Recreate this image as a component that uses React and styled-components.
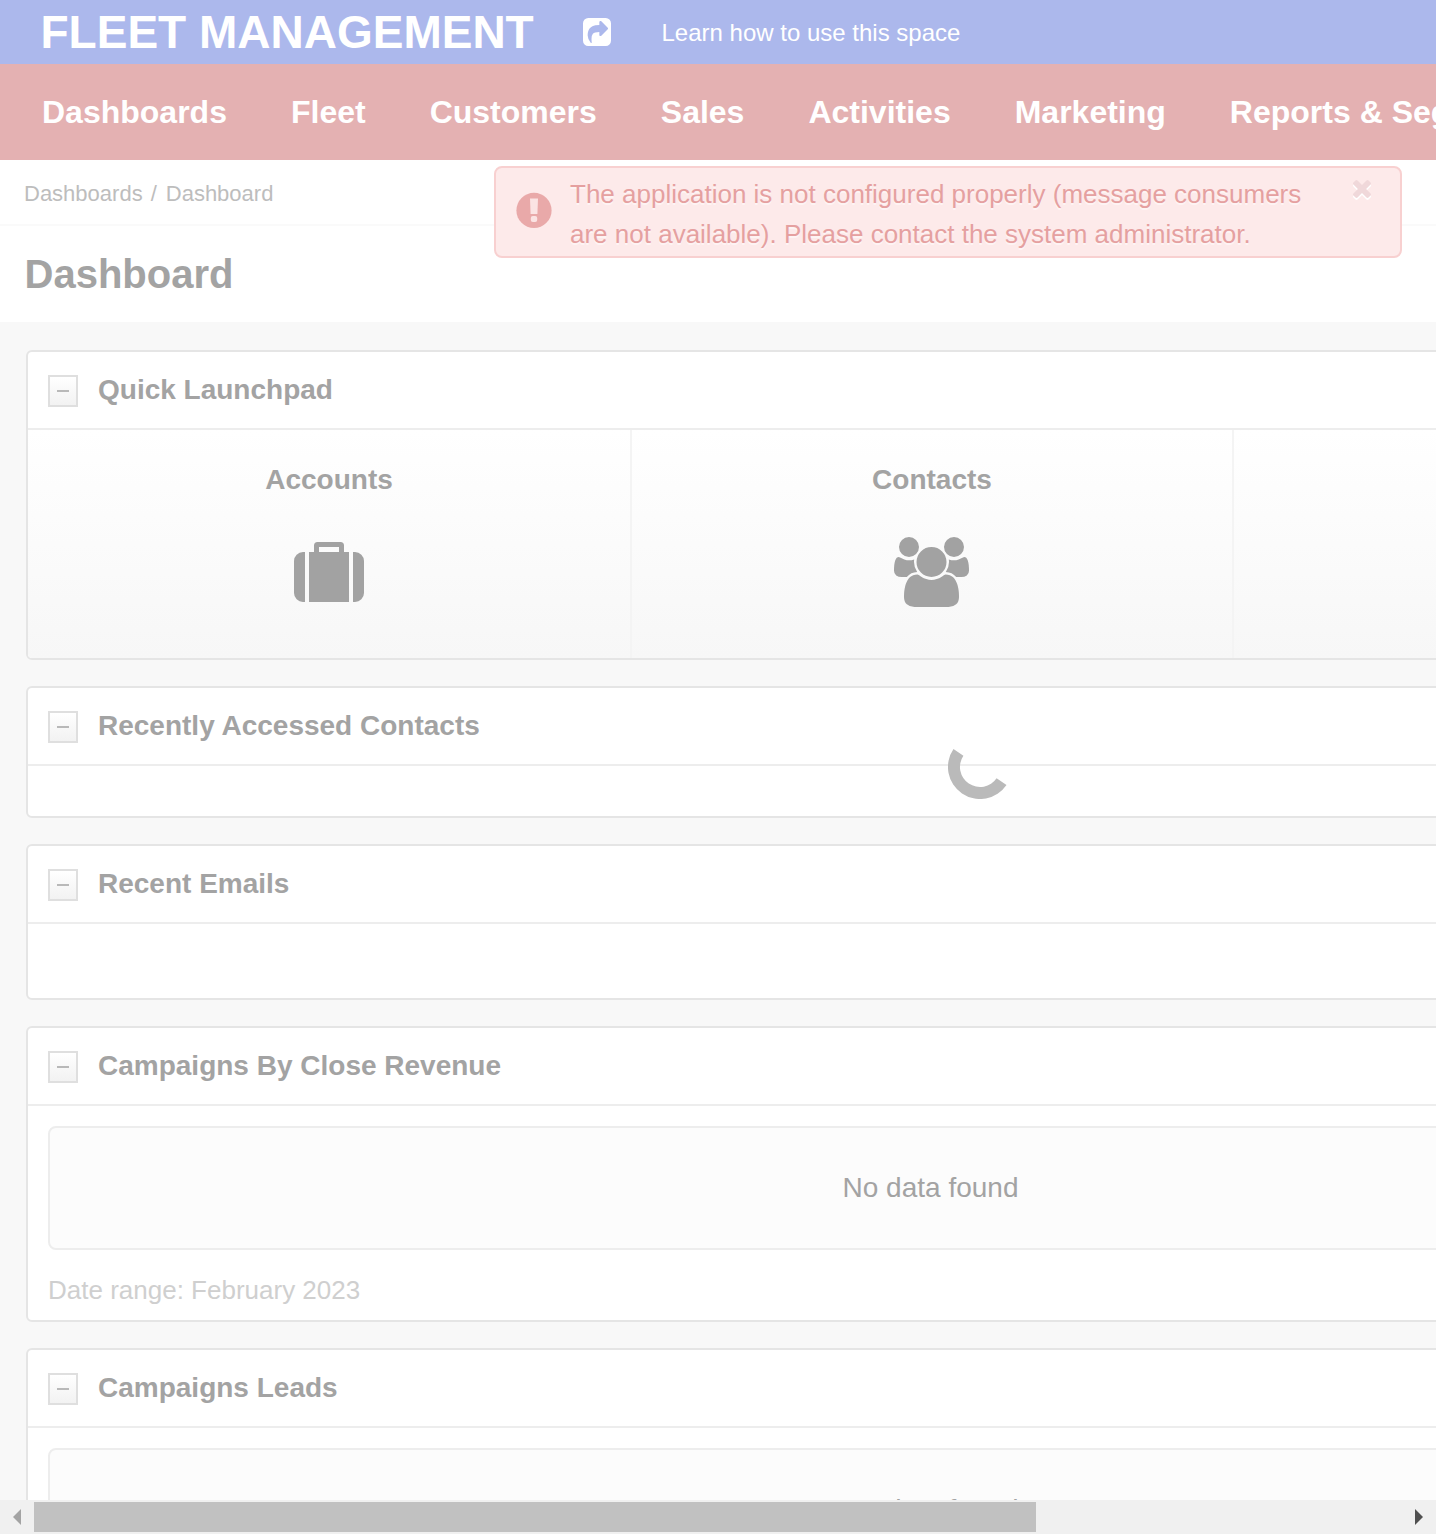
import React from "react";
import styled, { createGlobalStyle } from "styled-components";

const GlobalStyle = createGlobalStyle`
  *, *::before, *::after { box-sizing: border-box; }
  body { margin: 0; background: #fff; overflow: hidden; }
`;

const Window = styled.div`
  position: relative;
  display: flex;
  flex-direction: column;
  width: 1436px;
  height: 1534px;
  overflow: hidden;
  font-family: "Liberation Sans", Arial, sans-serif;
  color: #a3a3a3;
  background: #f8f8f8;
`;

const Viewport = styled.div`
  flex: 1;
  min-height: 0;
  overflow: hidden;
`;

const Page = styled.div`
  width: 1861px;
`;

const TopBar = styled.header`
  display: flex;
  align-items: center;
  height: 64px;
  padding-left: 40.5px;
  background: #acb8ec;
  color: #fff;
`;

const Brand = styled.div`
  font-size: 46px;
  font-weight: 700;
  line-height: 64px;
  white-space: nowrap;
  width: 542.5px;
`;

const ShareIcon = styled.svg`
  display: block;
  width: 28px;
  height: 28px;
  margin-bottom: 1px;
  fill: #fff;
`;

const HelpLink = styled.a`
  margin-left: 50.5px;
  padding-top: 2px;
  font-size: 24px;
  line-height: 28px;
`;

const Nav = styled.nav`
  display: flex;
  gap: 64px;
  height: 96px;
  padding-left: 42px;
  background: #e4b1b2;
`;

const NavItem = styled.a`
  color: #fff;
  font-size: 32px;
  font-weight: 700;
  line-height: 96px;
  white-space: nowrap;
`;

const Breadcrumbs = styled.div`
  display: flex;
  height: 66px;
  padding-left: 24px;
  border-bottom: 2px solid #fafafa;
  background: #fff;
  color: #bdbdbd;
  font-size: 22px;
  line-height: 68px;
`;

const Separator = styled.span`
  margin: 0 9px 0 8px;
`;

const TitleBar = styled.div`
  height: 96px;
  padding-left: 24.5px;
  background: #fff;
`;

const Title = styled.h1`
  margin: 0;
  font-size: 40px;
  font-weight: 700;
  line-height: 96px;
`;

const Content = styled.main`
  display: flex;
  flex-direction: column;
  gap: 26px;
  padding: 28px 26px;
`;

const Card = styled.section`
  border: 2px solid #e5e5e5;
  border-radius: 6px;
  background: #fff;
  overflow: hidden;
`;

const CardHeader = styled.div`
  display: flex;
  align-items: center;
  gap: 20px;
  height: 78px;
  padding: 2px 20px 0;
  border-bottom: 2px solid #ededed;
`;

const Toggle = styled.button`
  display: flex;
  align-items: center;
  justify-content: center;
  width: 30px;
  height: 32px;
  padding: 0;
  border: 2px solid #dfdfdf;
  background: linear-gradient(#fff, #f2f2f2);

  &::before {
    content: "";
    width: 12px;
    height: 2px;
    background: #b9b9b9;
  }
`;

const CardTitle = styled.h2`
  margin: 0 0 3px;
  font-size: 28px;
  font-weight: 700;
  line-height: 36px;
`;

const CardBody = styled.div`
  height: ${(p) => p.$height}px;
  padding: ${(p) => (p.$flush ? 0 : "20px")};
`;

const Launchpad = styled.div`
  display: flex;
  height: 228px;
  background: linear-gradient(#fff, #f7f7f7);
`;

const Tile = styled.a`
  display: flex;
  flex-direction: column;
  align-items: center;
  width: ${(p) => p.$width}px;
  padding-top: 32px;
  border-right: 2px solid #f4f4f4;
  font-size: 28px;
  font-weight: 700;
  line-height: 36px;
`;

const TileIcon = styled.svg`
  display: block;
  width: ${(p) => p.$w}px;
  height: ${(p) => p.$h}px;
  margin-top: ${(p) => p.$top}px;
  fill: #a2a2a2;
`;

const EmptyState = styled.div`
  height: 124px;
  border: 2px solid #ededed;
  border-radius: 8px;
  background: #fcfcfc;
  font-size: 28px;
  line-height: 120px;
  text-align: center;
`;

const RangeNote = styled.div`
  margin-top: 21px;
  color: #cfcfcf;
  font-size: 26px;
  line-height: 38px;
`;

const Alert = styled.div`
  position: absolute;
  left: 494px;
  top: 166px;
  display: flex;
  align-items: flex-start;
  width: 908px;
  height: 92px;
  padding: 6px 29px 0 20px;
  border: 2px solid #f8d0d0;
  border-radius: 8px;
  background: #fdeaea;
`;

const AlertIcon = styled.svg`
  flex: none;
  width: 36px;
  height: 36px;
  margin-top: 18px;
`;

const AlertText = styled.p`
  flex: 1;
  margin: 0 0 0 18px;
  color: #e5a0a0;
  font-size: 26px;
  line-height: 40px;
  white-space: nowrap;
  text-shadow: 0 2px 0 rgba(255, 255, 255, 0.5);
`;

const CloseIcon = styled.svg`
  flex: none;
  width: 18px;
  height: 18px;
  margin-top: 6px;
  fill: #f0d8da;
  overflow: visible;
  filter: drop-shadow(0 2px 0 #fff);
`;

const Spinner = styled.svg`
  position: absolute;
  left: 948px;
  top: 735px;
  width: 64px;
  height: 64px;
`;

const Scrollbar = styled.div`
  display: flex;
  align-items: center;
  flex: none;
  height: 34px;
  background: #f0f0f0;
`;

const Track = styled.div`
  flex: 1;
  height: 30px;
`;

const Thumb = styled.div`
  width: 1002px;
  height: 30px;
  background: #c1c1c1;
`;

const ScrollArrow = styled.svg`
  display: block;
  width: 34px;
  height: 34px;
  fill: ${(p) => p.$color};
`;

const navItems = [
  "Dashboards",
  "Fleet",
  "Customers",
  "Sales",
  "Activities",
  "Marketing",
  "Reports & Segments",
];

function Widget({ title, height, flush, children }) {
  return (
    <Card>
      <CardHeader>
        <Toggle aria-label="Collapse" />
        <CardTitle>{title}</CardTitle>
      </CardHeader>
      <CardBody $height={height} $flush={flush}>
        {children}
      </CardBody>
    </Card>
  );
}

function ChartWidget({ title }) {
  return (
    <Widget title={title} height={214}>
      <EmptyState>No data found</EmptyState>
      <RangeNote>Date range: February 2023</RangeNote>
    </Widget>
  );
}

export default function App() {
  return (
    <Window>
      <GlobalStyle />
      <Viewport>
        <Page>
          <TopBar>
            <Brand>FLEET MANAGEMENT</Brand>
            <ShareIcon viewBox="0 0 1536 1536">
              <path
                transform="translate(0 1408) scale(1 -1)"
                d="M1005 435l352 352q19 19 19 45t-19 45l-352 352q-30 31 -69 14q-40 -17 -40 -59v-160q-119 0 -216 -19.5t-162.5 -51t-114 -79t-76.5 -95.5t-44.5 -109t-21.5 -111.5t-5 -110.5q0 -181 167 -404q10 -12 25 -12q7 0 13 3q22 9 19 33q-44 354 62 473q46 52 130 75.5t224 23.5v-160q0 -42 40 -59q12 -5 24 -5q26 0 45 19zM1536 1120v-960q0 -119 -84.5 -203.5t-203.5 -84.5h-960q-119 0 -203.5 84.5t-84.5 203.5v960q0 119 84.5 203.5t203.5 84.5h960q119 0 203.5 -84.5t84.5 -203.5z"
              />
            </ShareIcon>
            <HelpLink>Learn how to use this space</HelpLink>
          </TopBar>
          <Nav>
            {navItems.map((item) => (
              <NavItem key={item}>{item}</NavItem>
            ))}
          </Nav>
          <Breadcrumbs>
            <span>Dashboards</span>
            <Separator>/</Separator>
            <span>Dashboard</span>
          </Breadcrumbs>
          <TitleBar>
            <Title>Dashboard</Title>
          </TitleBar>
          <Content>
            <Widget title="Quick Launchpad" height={228} flush>
              <Launchpad>
                <Tile $width={604}>
                  Accounts
                  <TileIcon $w={70} $h={60} $top={44} viewBox="0 0 70 60">
                    <path d="M11 10v50H9a9 9 0 0 1-9-9V19a9 9 0 0 1 9-9zM55 10v50H15V10h5V3.500a3.500 3.500 0 0 1 3.500-3.500h23a3.500 3.500 0 0 1 3.500 3.500V10zM25 10h20V5H25zM59 10h2a9 9 0 0 1 9 9v32a9 9 0 0 1-9 9h-2z" fillRule="evenodd" />
                  </TileIcon>
                </Tile>
                <Tile $width={602}>
                  Contacts
                  <TileIcon $w={76} $h={70} $top={39} viewBox="0 0 1945.600 1792">
                    <path d="M593 896q-162 5-265 128h-134q-82 0-138-40.500t-56-118.500q0-353 124-353 6 0 43.500 21t97.500 42.500 119 21.500q67 0 133-23-5 37-5 66 0 139 81 256zm1071 637q0 120-73 189.500t-194 69.500h-874q-121 0-194-69.500t-73-189.500q0-53 3.500-103.500t14-109 26.500-108.500 43-97.500 62-81 85.500-53.500 111.500-20q10 0 43 21.500t73 48 107 48 135 21.500 135-21.500 107-48 73-48 43-21.500q61 0 111.500 20t85.500 53.500 62 81 43 97.500 26.500 108.500 14 109 3.500 103.500zm-1024-1277q0 106-75 181t-181 75-181-75-75-181 75-181 181-75 181 75 75 181zm704 384q0 159-112.500 271.500t-271.500 112.500-271.500-112.500-112.500-271.500 112.500-271.500 271.500-112.500 271.500 112.500 112.500 271.500zm576 225q0 78-56 118.500t-138 40.500h-134q-103-123-265-128 81-117 81-256 0-29-5-66 66 23 133 23 59 0 119-21.500t97.500-42.500 43.500-21q124 0 124 353zm-128-609q0 106-75 181t-181 75-181-75-75-181 75-181 181-75 181 75 75 181z" />
                  </TileIcon>
                </Tile>
              </Launchpad>
            </Widget>
            <Widget title="Recently Accessed Contacts" height={50} />
            <Widget title="Recent Emails" height={74} />
            <ChartWidget title="Campaigns By Close Revenue" />
            <ChartWidget title="Campaigns Leads" />
          </Content>
        </Page>
      </Viewport>

      <Scrollbar>
        <ScrollArrow viewBox="0 0 34 34" $color="#a3a3a3">
          <path d="M21 9v16l-8-8z" />
        </ScrollArrow>
        <Track>
          <Thumb />
        </Track>
        <ScrollArrow viewBox="0 0 34 34" $color="#505050">
          <path d="M13 9v16l8-8z" />
        </ScrollArrow>
      </Scrollbar>

      <Alert>
        <AlertIcon viewBox="0 0 36 36">
          <circle cx="18" cy="18.400" r="17.600" fill="#e9a9a9" />
          <path d="M14 6.500h8l-0.600 15.500h-6.800z" fill="#fbe3e3" />
          <rect x="14.800" y="24" width="6.400" height="6" rx="2" fill="#fbe3e3" />
        </AlertIcon>
        <AlertText>
          The application is not configured properly (message consumers
          <br />
          are not available). Please contact the system administrator.
        </AlertText>
        <CloseIcon viewBox="302 366 1188 1188">
          <path d="M1490 1322q0 40-28 68l-136 136q-28 28-68 28t-68-28l-294-294-294 294q-28 28-68 28t-68-28l-136-136q-28-28-28-68t28-68l294-294-294-294q-28-28-28-68t28-68l136-136q28-28 68-28t68 28l294 294 294-294q28-28 68-28t68 28l136 136q28 28 28 68t-28 68l-294 294 294 294q28 28 28 68z" />
        </CloseIcon>
      </Alert>

      <Spinner viewBox="-32 -32 64 64">
        <path d="M-26.500 -18A32 32 0 0 0 26.500 18L16.600 11.200A20 20 0 0 1 -16.600 -11.200z" fill="#bababa" />
      </Spinner>
    </Window>
  );
}
